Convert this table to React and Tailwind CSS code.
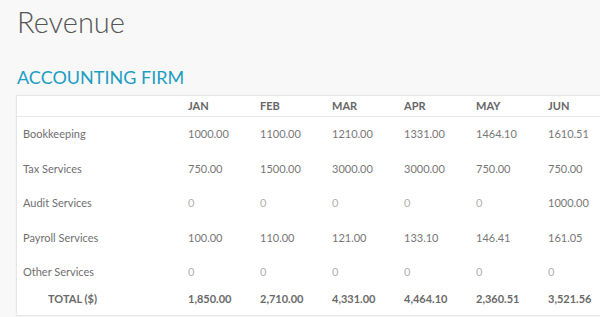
const months = ["JAN", "FEB", "MAR", "APR", "MAY", "JUN"];

const rows = [
  { label: "Bookkeeping", values: ["1000.00", "1100.00", "1210.00", "1331.00", "1464.10", "1610.51"] },
  { label: "Tax Services", values: ["750.00", "1500.00", "3000.00", "3000.00", "750.00", "750.00"] },
  { label: "Audit Services", values: ["0", "0", "0", "0", "0", "1000.00"] },
  { label: "Payroll Services", values: ["100.00", "110.00", "121.00", "133.10", "146.41", "161.05"] },
  { label: "Other Services", values: ["0", "0", "0", "0", "0", "0"] },
];

const totals = ["1,850.00", "2,710.00", "4,331.00", "4,464.10", "2,360.51", "3,521.56"];

const App = () => {
  return (
    <div className="w-[600px] h-[317px] overflow-hidden bg-[#f8f8f8] font-['Lato',sans-serif]">
      <div className="pl-[16px] pt-[2px]">
        <h1 className="text-[29px] leading-[40px] font-light text-[#555] pl-[1px]">Revenue</h1>

        <h2 className="mt-[25px] text-[18px] leading-[20px] text-[#1b9ec2] pl-[1px]">ACCOUNTING FIRM</h2>

        {/* Table card */}
        <div className="mt-[8px] w-[700px] bg-white border border-[#e6e6e6] shadow-[0_0_2px_rgba(0,0,0,0.04)] text-[11px]">
          <div className="flex h-[21px] items-center border-b border-[#e8e8e8] font-bold text-[#666]">
            <div className="w-[164px] shrink-0" />
            {months.map((m) => (
              <div key={m} className="w-[72px] shrink-0 pl-[7px]">{m}</div>
            ))}
          </div>

          {rows.map((row) => (
            <div key={row.label} className="flex h-[34.6px] items-center">
              <div className="w-[164px] shrink-0 pl-[6px] text-[#6f6f6f]">{row.label}</div>
              {row.values.map((v, i) => (
                <div
                  key={i}
                  className={`w-[72px] shrink-0 pl-[7px] ${v === "0" ? "text-[#b0b0b0]" : "text-[#777]"}`}
                >
                  {v}
                </div>
              ))}
            </div>
          ))}

          <div className="flex h-[25px] items-start pt-[1px] font-bold text-[#6a6a6a]">
            <div className="w-[164px] shrink-0 pl-[31px]">TOTAL ($)</div>
            {totals.map((t, i) => (
              <div key={i} className="w-[72px] shrink-0 pl-[7px]">{t}</div>
            ))}
          </div>
        </div>
      </div>
    </div>
  );
};

export default App;
